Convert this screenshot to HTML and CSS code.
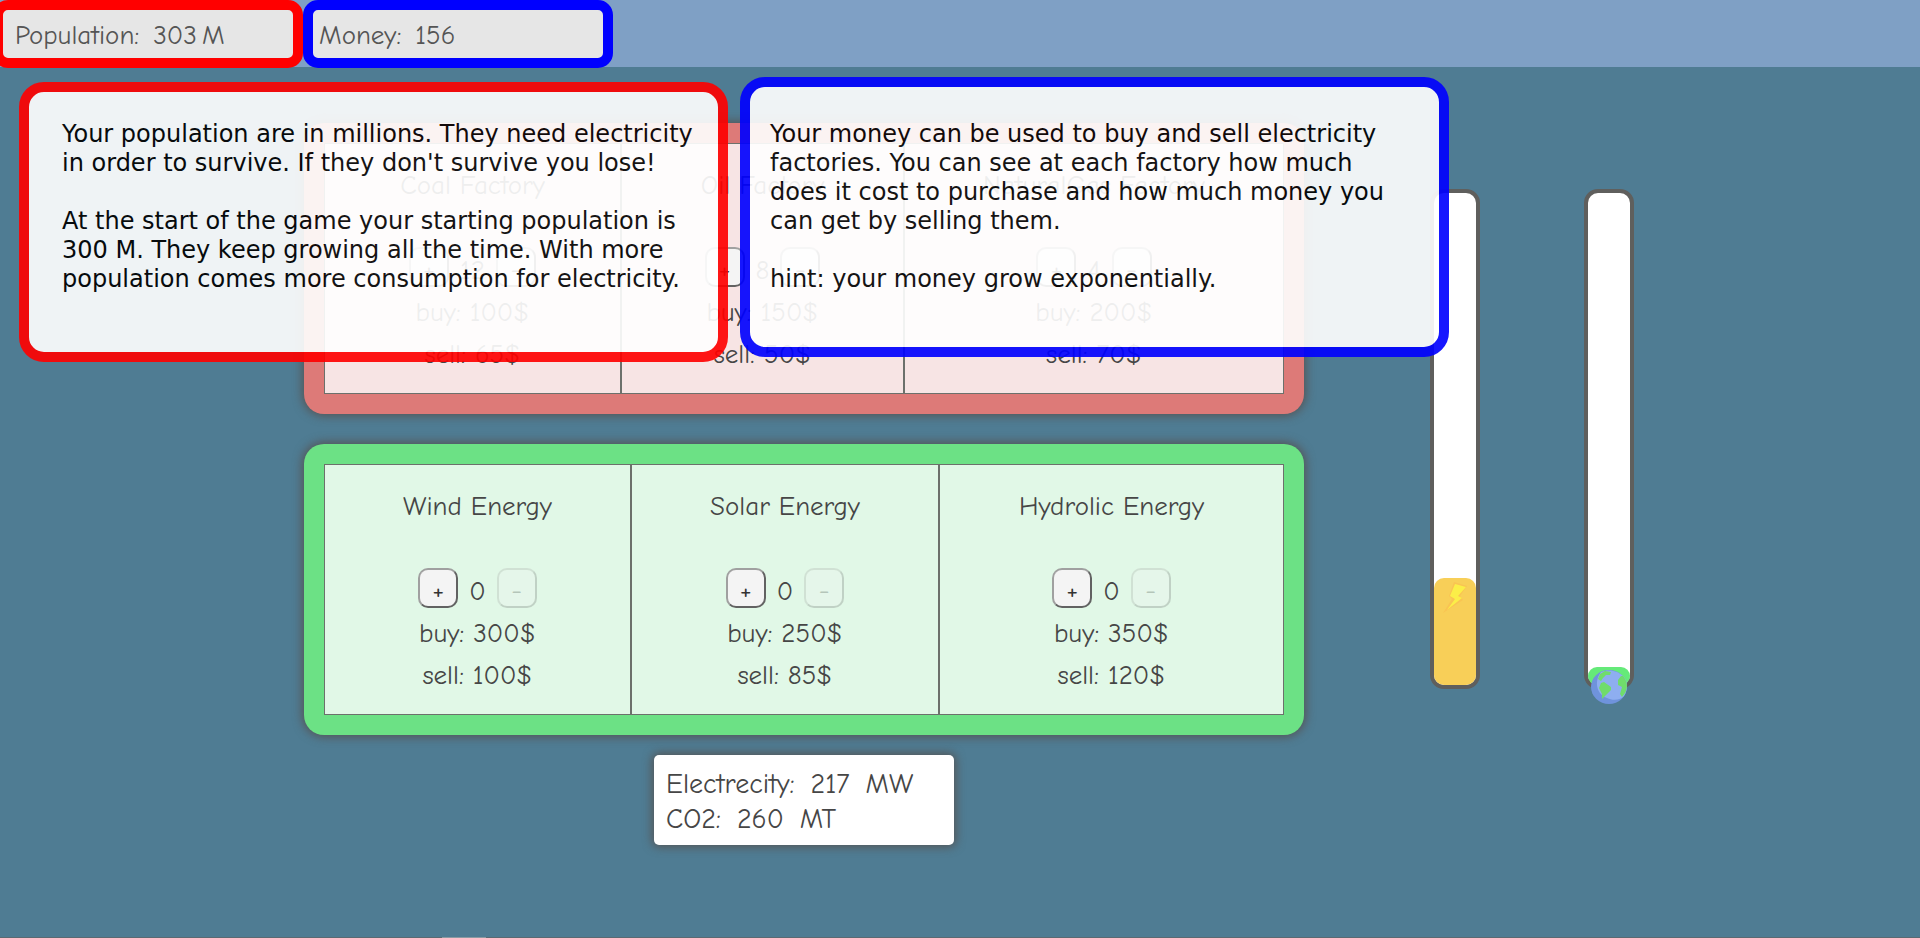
FILE: index.html
```html
<!DOCTYPE html>
<html lang="en">
<head>
<meta charset="utf-8">
<title>Power Game</title>
<link rel="stylesheet" href="styles.css">
</head>
<body>
<header class="topbar">
  <div class="stat stat-population"><span>Population:</span><span class="stat-value">303<span class="unit">M</span></span></div>
  <div class="stat stat-money"><span>Money:</span><span class="stat-value">156</span></div>
</header>

<main class="game">
  <div class="plants">
    <section class="panel panel-fossil">
      <article class="plant">
        <h2 class="plant-name">Coal Factory</h2>
        <div class="controls"><button class="step" aria-label="Buy coal factory">+</button><span class="count">12</span><button class="step" aria-label="Sell coal factory">-</button></div>
        <p class="price">buy: 100$</p>
        <p class="price">sell: 65$</p>
      </article>
      <article class="plant">
        <h2 class="plant-name">Oil Factory</h2>
        <div class="controls"><button class="step" aria-label="Buy oil factory">+</button><span class="count">8</span><button class="step" aria-label="Sell oil factory">-</button></div>
        <p class="price">buy: 150$</p>
        <p class="price">sell: 50$</p>
      </article>
      <article class="plant">
        <h2 class="plant-name">NaturalGas Factory</h2>
        <div class="controls"><button class="step" aria-label="Buy natural gas factory">+</button><span class="count">4</span><button class="step" aria-label="Sell natural gas factory">-</button></div>
        <p class="price">buy: 200$</p>
        <p class="price">sell: 70$</p>
      </article>
    </section>

    <section class="panel panel-green">
      <article class="plant">
        <h2 class="plant-name">Wind Energy</h2>
        <div class="controls"><button class="step" aria-label="Buy wind energy">+</button><span class="count">0</span><button class="step" aria-label="Sell wind energy" disabled>-</button></div>
        <p class="price">buy: 300$</p>
        <p class="price">sell: 100$</p>
      </article>
      <article class="plant">
        <h2 class="plant-name">Solar Energy</h2>
        <div class="controls"><button class="step" aria-label="Buy solar energy">+</button><span class="count">0</span><button class="step" aria-label="Sell solar energy" disabled>-</button></div>
        <p class="price">buy: 250$</p>
        <p class="price">sell: 85$</p>
      </article>
      <article class="plant">
        <h2 class="plant-name">Hydrolic Energy</h2>
        <div class="controls"><button class="step" aria-label="Buy hydrolic energy">+</button><span class="count">0</span><button class="step" aria-label="Sell hydrolic energy" disabled>-</button></div>
        <p class="price">buy: 350$</p>
        <p class="price">sell: 120$</p>
      </article>
    </section>

    <section class="totals">
      <p class="total"><span>Electrecity:</span><span>217</span><span>MW</span></p>
      <p class="total"><span>CO2:</span><span>260</span><span>MT</span></p>
    </section>
  </div>

  <div class="gauges">
    <div class="gauge">
      <div class="fill fill-power" style="height: 107px">
        <svg class="bolt" viewBox="0 0 26 32" aria-hidden="true">
          <path d="M12 0 L25 4 L18 14 L21 18 L1 31 L10 17 L7 14 Z" fill="#f9c453"/>
          <path d="M13 2 L24 5 L16 14 L20 16 L5 28 L13 17 L8 14 Z" fill="#fbee48"/>
        </svg>
      </div>
    </div>
    <div class="gauge">
      <div class="fill fill-earth" style="height: 18px">
        <svg class="globe" viewBox="0 0 36 34" aria-hidden="true">
          <ellipse cx="18" cy="17" rx="18" ry="17" fill="#6f93dc"/>
          <path d="M10 2 C3 11 5 24 16 28 C22 31 30 30 33 26 C37 19 37 12 33 7 C27 0 17 -1 10 2 Z" fill="#8eaef0"/>
          <path d="M9 4 L14 1 L20 2 L19 5 L15 5 L12 8 L10 11 L7 9 Z" fill="#70dc6c"/>
          <path d="M10 13 L13 12 L20 17 L20 20 L15 25 L11 29 L11 24 L8 18 Z" fill="#70dc6c"/>
          <path d="M30 6 L27 10 L27 15 L31 17 L29 24 L31 27 Q36 22 36 15 Q35 9 32 6 Z" fill="#70dc6c"/>
        </svg>
      </div>
    </div>
  </div>
</main>

<div class="bottom-edge"></div>

<aside class="tip tip-population">
  <p>Your population are in millions. They need electricity in order to survive. If they don't survive you lose!</p>
  <p>At the start of the game your starting population is 300 M. They keep growing all the time. With more population comes more consumption for electricity.</p>
</aside>
<aside class="tip tip-money">
  <p>Your money can be used to buy and sell electricity factories. You can see at each factory how much does it cost to purchase and how much money you can get by selling them.</p>
  <p>hint: your money grow exponentially.</p>
</aside>
</body>
</html>
```
FILE: styles.css
```css
* { box-sizing: border-box; }

body {
  margin: 0;
  min-height: 100vh;
  position: relative;
  display: flex;
  flex-direction: column;
  background: #4f7c93;
  color: #464646;
  font-family: "Comic Sans MS", "Comic Neue", cursive;
  font-size: 27px;
  overflow-x: hidden;
}

h2, p { margin: 0; font-size: inherit; font-weight: normal; }

.topbar {
  display: flex;
  height: 67px;
  background: #7fa0c5;
}

.stat {
  display: flex;
  align-items: center;
  gap: 14px;
  width: 310px;
  height: 68px;
  border: 10px solid;
  border-radius: 15px;
  background: #e6e6e6;
  color: #555;
  padding: 2px 0 0 6px;
}
.stat-population { border-color: #f00; margin-left: -7px; padding-left: 12px; }
.stat-money { border-color: #00f; }
.unit { margin-left: 5px; }

.game {
  display: flex;
  align-items: flex-start;
  padding: 56px 0 0 304px;
}

.plants { width: 1000px; }

.panel {
  display: grid;
  padding: 20px;
  border-radius: 20px;
  box-shadow: 0 0 10px 2px #555;
  margin-bottom: 30px;
}
.panel-fossil { background: #dd7a78; grid-template-columns: 297fr 283fr 380fr; }
.panel-green { background: #6ce185; grid-template-columns: 307fr 308fr 345fr; margin-bottom: 20px; }

.plant {
  border: 1px solid #6c706b;
  padding: 21px 0 17px;
  text-align: center;
  line-height: 42px;
}
.panel-fossil .plant { background: #f7e4e4; }
.panel-green .plant { background: #e1f8e7; }

.plant-name { margin-bottom: 40px; }

.controls {
  display: flex;
  justify-content: center;
  align-items: flex-start;
  gap: 11px;
  height: 45px;
}
.count { line-height: 48px; }

.step {
  width: 40px;
  height: 40px;
  border: 2px solid;
  border-color: #a0a0a0 #626262 #626262 #a0a0a0;
  border-radius: 10px;
  background: #f4f4f4;
  color: #333;
  font-family: inherit;
  font-size: 27px;
  line-height: 28px;
  padding: 6px 0 0;
}
.step:disabled { opacity: 0.25; }

.totals {
  width: 300px;
  margin: 0 auto;
  padding: 12px 12px 8px;
  border-radius: 5px;
  background: #fff;
  box-shadow: 0 0 10px 2px #555;
  font-size: 28px;
  line-height: 35px;
}
.total { display: flex; gap: 16px; }

.gauges {
  display: flex;
  gap: 104px;
  margin: 66px 0 0 126px;
}
.gauge {
  display: flex;
  align-items: flex-end;
  width: 50px;
  height: 500px;
  border: 4px solid #5f5f5d;
  border-radius: 14px;
  background: #fff;
}
.fill {
  display: flex;
  justify-content: center;
  align-items: flex-start;
  width: 100%;
  border-radius: 10px;
}
.fill-power { background: #f8cf58; }
.fill-earth { background: #65ea79; }
.bolt { width: 26px; height: 32px; margin-top: 4px; }
.globe { flex: none; width: 36px; height: 34px; margin-top: 3px; }

.bottom-edge {
  height: 1px;
  margin-top: auto;
  background: #5a6a72;
}
.bottom-edge::before {
  content: "";
  display: block;
  width: 44px;
  height: 1px;
  margin-left: 442px;
  background: #8a9aa2;
}

.tip {
  position: absolute;
  width: 709px;
  height: 280px;
  border: 10px solid;
  border-radius: 25px;
  background: #fff;
  color: #000;
  opacity: 0.91;
  font-family: "DejaVu Sans", sans-serif;
  font-size: 24px;
  line-height: 29px;
}
.tip p + p { margin-top: 29px; }
.tip-population { left: 19px; top: 82px; border-color: #f00; padding: 28px 20px 0 33px; }
.tip-money { left: 740px; top: 77px; border-color: #00f; padding: 33px 40px 0 20px; }
```
